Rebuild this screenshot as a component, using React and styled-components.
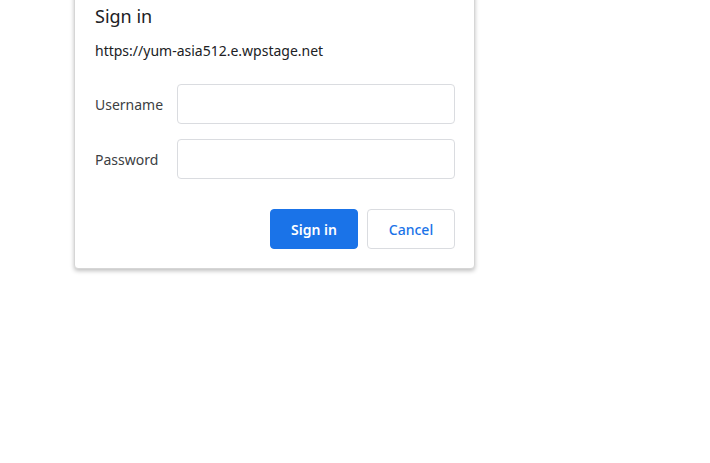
import React from "react";
import styled, { createGlobalStyle } from "styled-components";

const Global = createGlobalStyle`
  html, body { margin: 0; padding: 0; background: #fff; }
  body { font-family: "Noto Sans", "Open Sans", sans-serif; }
`;

const Page = styled.div`
  width: 710px;
  height: 463px;
  overflow: hidden;
  background: #fff;
`;

const Dialog = styled.div`
  box-sizing: border-box;
  margin: -17px 0 0 74px;
  width: 401px;
  padding: 20px 19px 19px 20px;
  background: #fff;
  border: 1px solid #d6d6d6;
  border-radius: 4px;
  box-shadow: 0 2px 4px rgba(0, 0, 0, 0.25);
`;

const Title = styled.h1`
  margin: 0;
  font-size: 18px;
  font-weight: 400;
  line-height: 24px;
  color: #202124;
`;

const Origin = styled.div`
  margin-top: 13px;
  font-size: 14px;
  line-height: 20px;
  color: #202124;
`;

const Form = styled.div`
  margin-top: 23px;
  display: grid;
  grid-template-columns: 82px 1fr;
  row-gap: 15px;
  align-items: center;
`;

const Label = styled.label`
  font-size: 14px;
  color: #3c4043;
`;

const Input = styled.input`
  box-sizing: border-box;
  width: 100%;
  height: 40px;
  border: 1px solid #dadce0;
  border-radius: 4px;
  outline: none;
  padding: 0 8px;
  font: inherit;
`;

const Actions = styled.div`
  margin-top: 30px;
  display: flex;
  justify-content: flex-end;
  gap: 9px;
`;

const Button = styled.button`
  box-sizing: border-box;
  width: 88px;
  height: 40px;
  border-radius: 4px;
  font-family: inherit;
  font-size: 14px;
  font-weight: ${(p) => (p.$primary ? 600 : 500)};
  cursor: pointer;
  background: ${(p) => (p.$primary ? "#1a73e8" : "#fff")};
  color: ${(p) => (p.$primary ? "#fff" : "#1a73e8")};
  border: 1px solid ${(p) => (p.$primary ? "#1a73e8" : "#dadce0")};
`;

export default function App() {
  return (
    <Page>
      <Global />
      <Dialog>
        <Title>Sign in</Title>
        <Origin>https://yum-asia512.e.wpstage.net</Origin>
        <Form>
          <Label>Username</Label>
          <Input type="text" />
          <Label>Password</Label>
          <Input type="password" />
        </Form>
        <Actions>
          <Button $primary>Sign in</Button>
          <Button>Cancel</Button>
        </Actions>
      </Dialog>
    </Page>
  );
}
